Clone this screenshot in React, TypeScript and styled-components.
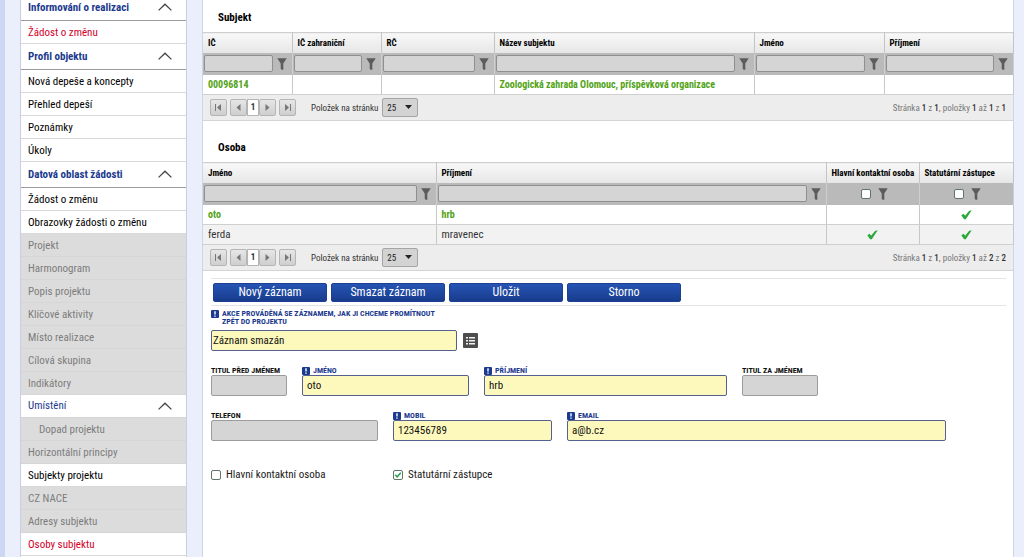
import React, { useId, useState } from "react";
import styled, { createGlobalStyle, css } from "styled-components";

const Global = createGlobalStyle`
  *, *::before, *::after { box-sizing: border-box; }
  body { margin: 0; background: #ebeffc; }
  body, input, button, select {
    font-family: "Roboto Condensed", "Liberation Sans Narrow", Roboto, sans-serif;
    font-size: 11px;
    color: #1a1a1a;
  }
`;

const Page = styled.div`
  display: flex;
  align-items: stretch;
  min-height: 100vh;
  padding: 0 10px 0 15px;
  border-left: 5px solid #cdd7f3;
  overflow: hidden;
`;

const Sidebar = styled.nav`
  flex: 0 0 167px;
  margin: -5px 15px 0 0;
  background: #fff;
  border: solid #c9cfe0;
  border-width: 0 1px;
`;

const SideHeader = styled.button<{ $nested?: boolean }>`
  display: flex;
  align-items: center;
  justify-content: space-between;
  width: 100%;
  height: ${(p) => (p.$nested ? 23 : 26)}px;
  padding: 0 14px 1px 7px;
  border: 0;
  border-bottom: 1px solid ${(p) => (p.$nested ? "#d5d5d5" : "#9a9a9a")};
  background: #fff;
  color: #1c3a8e;
  font-size: 11px;
  font-weight: ${(p) => (p.$nested ? 400 : 700)};
  text-align: left;
`;

const tones = {
  normal: css`color: #000; background: #fff;`,
  active: css`color: #d3002a; background: #fff;`,
  muted: css`color: #7c7c7c; background: #dcdcdc; border-bottom-color: #d6d6d6;`,
};

const SideItem = styled.a<{ $tone: keyof typeof tones; $indent?: boolean }>`
  display: block;
  height: 23px;
  padding-left: ${(p) => (p.$indent ? 18 : 7)}px;
  border-bottom: 1px solid #d9d9d9;
  font-size: 11px;
  line-height: 24px;
  text-decoration: none;
  white-space: nowrap;
  ${(p) => tones[p.$tone]}
`;

const Main = styled.main`
  flex: 1 1 0;
  min-width: 0;
  background: #fff;
  border: solid #cfd5e6;
  border-width: 0 1px;
`;

const Title = styled.h2<{ $first?: boolean }>`
  margin: 0;
  padding: ${(p) => (p.$first ? 10 : 19)}px 15px 6px;
  font-size: 11px;
  font-weight: 700;
  line-height: 16px;
  color: #000;
`;

const Table = styled.table`
  width: 100%;
  table-layout: fixed;
  border-collapse: collapse;
`;

const HeadCell = styled.th`
  height: 20px;
  padding: 0 5px;
  border-top: 1px solid #cfcfcf;
  border-right: 1px solid #c4c4c4;
  background: linear-gradient(#f8f8f8, #e6e6e6);
  color: #000;
  font-size: 9px;
  font-weight: 700;
  line-height: 12px;
  text-align: left;
  white-space: nowrap;
`;

const FilterCell = styled.td`
  height: 22px;
  padding: 0 5px 0 1px;
  border-right: 1px solid #cfcfcf;
  background: #bababa;
`;

const FilterLine = styled.div<{ $center?: boolean }>`
  display: flex;
  align-items: center;
  gap: ${(p) => (p.$center ? 7 : 4)}px;
  justify-content: ${(p) => (p.$center ? "center" : "stretch")};
  padding-left: ${(p) => (p.$center ? 7 : 0)}px;
`;

const FilterInput = styled.input`
  flex: 1 1 0;
  min-width: 0;
  height: 17px;
  padding: 0 3px;
  border: 1px solid #8f8f8f;
  border-radius: 2px;
  background: #d5d5d5;
`;

const IconButton = styled.button`
  display: flex;
  padding: 0;
  border: 0;
  background: none;
`;

const BodyCell = styled.td<{ $selected?: boolean; $center?: boolean }>`
  height: 20px;
  padding: 1px 5px 0;
  border-right: 1px solid #c8c8c8;
  border-bottom: 1px solid #d0d0d0;
  color: ${(p) => (p.$selected ? "#52a315" : "#333")};
  font-size: ${(p) => (p.$selected ? 10 : 11)}px;
  font-weight: ${(p) => (p.$selected ? 700 : 400)};
  line-height: 14px;
  text-align: ${(p) => (p.$center ? "center" : "left")};
  white-space: nowrap;

  svg { display: block; margin: 0 auto; }
`;

const BodyRow = styled.tr<{ $alt?: boolean }>`
  background: ${(p) => (p.$alt ? "#f2f2f2" : "#fff")};
`;

const PagerBar = styled.div`
  display: flex;
  align-items: center;
  height: 26px;
  padding: 0 7px;
  border-bottom: 1px solid #d4d4d4;
  background: #ededed;
  color: #333;
`;

const PagerButtons = styled.div`
  display: flex;
  align-items: center;
  gap: 3px;
`;

const PagerGroup = styled.div`
  display: flex;
`;

const PagerButton = styled.button`
  display: flex;
  align-items: center;
  justify-content: center;
  width: 17px;
  height: 17px;
  padding: 0;
  border: 1px solid #b5b5b5;
  border-radius: 2px;
  background: linear-gradient(#e6e6e6, #cfcfcf);
`;

const PageNumber = styled.span`
  width: 12px;
  height: 17px;
  border: 1px solid #b5b5b5;
  background: #fff;
  font-size: 9px;
  font-weight: 700;
  line-height: 15px;
  text-align: center;
`;

const PageSizeLabel = styled.label`
  margin: 0 4px 0 15px;
  font-size: 9px;
`;

const SelectWrap = styled.span`
  position: relative;
  display: flex;
  svg { position: absolute; right: 6px; top: 7px; pointer-events: none; }
`;

const PageSize = styled.select`
  appearance: none;
  width: 36px;
  height: 19px;
  padding: 0 4px;
  border: 1px solid #a5a5a5;
  border-radius: 2px;
  background: #d3d3d3;
  color: #222;
  font-size: 9px;
`;

const PageInfo = styled.span`
  margin-left: auto;
  color: #777;
  font-size: 9px;
  white-space: nowrap;
  b { font-weight: 500; color: #333; }
`;

const Form = styled.form`
  padding: 7px 7px 0 8px;
`;

const Toolbar = styled.div`
  display: flex;
  gap: 4px;
  padding: 4px 2px 3px;
  border-top: 1px solid #e4e4e4;
  border-bottom: 1px solid #e4e4e4;
`;

const Action = styled.button`
  width: 114px;
  height: 19px;
  padding: 0;
  border: 1px solid #1c3f94;
  border-radius: 2px;
  background: linear-gradient(#2654b4, #183c8c);
  color: #fff;
  font-size: 12px;
  line-height: 17px;
`;

const FieldRow = styled.div<{ $top: number }>`
  display: flex;
  align-items: flex-end;
  gap: 15px;
  margin-top: ${(p) => p.$top}px;
`;

const FieldBox = styled.div<{ $width: number }>`
  display: flex;
  flex-direction: column;
  flex: 0 1 ${(p) => p.$width}px;
  min-width: 0;
`;

const FieldLabel = styled.label<{ $required?: boolean }>`
  display: flex;
  gap: 3px;
  color: ${(p) => (p.$required ? "#1c3a8e" : "#111")};
  font-size: 8px;
  font-weight: 700;
  line-height: 8px;
  text-transform: uppercase;
  svg { flex: none; }
`;

const TextInput = styled.input<{ $required?: boolean; $tight?: boolean }>`
  width: 100%;
  height: 21px;
  padding: 0 ${(p) => (p.$tight ? 1 : 4)}px;
  border: 1px solid ${(p) => (p.$required ? "#55608f" : "#9c9c9c")};
  border-radius: 2px;
  background: ${(p) => (p.$required ? "#fdf9bd" : "#d5d5d5")};
  color: #111;
  font-size: 11px;
`;

const ActionBlock = styled.div`
  margin-top: 4px;
`;

const LabelText = styled.span<{ $max?: number }>`
  max-width: ${(p) => (p.$max ? `${p.$max}px` : "none")};
  white-space: ${(p) => (p.$max ? "normal" : "nowrap")};
`;

const ComboRow = styled.div`
  display: flex;
  align-items: center;
  gap: 6px;
  margin-top: 4px;
`;

const ComboField = styled.div`
  flex: 0 1 246px;
`;

const CheckRow = styled.div`
  display: flex;
  margin-top: 27px;
`;

const CheckItem = styled.label`
  display: flex;
  align-items: center;
  gap: 5px;
  flex: 0 0 182px;
  font-size: 11px;
  line-height: 14px;
`;

const BoxWrap = styled.span`
  position: relative;
  display: flex;
  svg { position: absolute; left: 1px; top: 1px; pointer-events: none; }
`;

const Box = styled.input`
  appearance: none;
  width: 10px;
  height: 10px;
  margin: 0;
  border: 1px solid #5f7568;
  border-radius: 2px;
  background: #fff;
`;

const Chevron = () => (
  <svg width="14" height="8" viewBox="0 0 14 8" fill="none" stroke="#444" strokeWidth="1.3">
    <path d="M.6 7.4 7 1.2l6.400 6.200" />
  </svg>
);

const Funnel = () => (
  <svg width="10" height="12" viewBox="0 0 10 12" fill="#5c5c5c">
    <path d="M.3.3h9.400L6.300 5.600V11.700H4.500L3.700 10.500V5.600z" />
  </svg>
);

const Tick = () => (
  <svg width="11" height="10" viewBox="0 0 11 10" fill="#2aa83c">
    <path d="M.3 5.200 2.700 3.800l1.400 1.900L8 1 10.700.3 4.800 9.200H3.100z" />
  </svg>
);

const Required = () => (
  <svg width="8" height="8" viewBox="0 0 8 8">
    <rect width="8" height="8" rx="1" fill="#1c3a8e" />
    <path d="M3.300 1.200h1.400v3.400H3.300zM3.300 5.400h1.400v1.300H3.300z" fill="#fff" />
  </svg>
);

const ListIcon = () => (
  <svg width="15" height="15" viewBox="0 0 15 15">
    <rect width="15" height="15" rx="1" fill="#4d4d4d" />
    <path d="M3 4h2v1.500H3zM3 7h2v1.500H3zM3 10h2v1.500H3zM6 4h6v1.500H6zM6 7h6v1.500H6zM6 10h6v1.500H6z" fill="#f2f2f2" />
  </svg>
);

const arrows = {
  first: "M1 1h1v7H1zM7 1v7L3 4.500z",
  prev: "M6.500 1v7L2.500 4.500z",
  next: "M2.500 1v7l4-3.500z",
  last: "M7 1h1v7H7zM2 1v7l4-3.500z",
};

const Arrow = ({ kind }: { kind: keyof typeof arrows }) => (
  <svg width="9" height="9" viewBox="0 0 9 9" fill="#777">
    <path d={arrows[kind]} />
  </svg>
);

function Pager({ count }: { count: number }) {
  const id = useId();
  return (
    <PagerBar>
      <PagerButtons>
        <PagerButton aria-label="První"><Arrow kind="first" /></PagerButton>
        <PagerGroup>
          <PagerButton aria-label="Předchozí"><Arrow kind="prev" /></PagerButton>
          <PageNumber>1</PageNumber>
          <PagerButton aria-label="Další"><Arrow kind="next" /></PagerButton>
        </PagerGroup>
        <PagerButton aria-label="Poslední"><Arrow kind="last" /></PagerButton>
      </PagerButtons>
      <PageSizeLabel htmlFor={id}>Položek na stránku</PageSizeLabel>
      <SelectWrap>
        <PageSize id={id} defaultValue="25">
          <option>25</option>
        </PageSize>
        <svg width="7" height="4" viewBox="0 0 7 4" fill="#222"><path d="M0 0h7L3.500 4z" /></svg>
      </SelectWrap>
      <PageInfo>
        Stránka <b>1</b> z <b>1</b>, položky <b>1</b> až <b>{count}</b> z <b>{count}</b>
      </PageInfo>
    </PagerBar>
  );
}

type Column = { name: string; width: number; check?: boolean };

function Grid({ columns, rows }: { columns: Column[]; rows: (string | boolean)[][] }) {
  return (
    <Table>
      <colgroup>
        {columns.map((c) => <col key={c.name} width={c.width} />)}
      </colgroup>
      <thead>
        <tr>{columns.map((c) => <HeadCell key={c.name} scope="col">{c.name}</HeadCell>)}</tr>
      </thead>
      <tbody>
        <tr>
          {columns.map((c) => (
            <FilterCell key={c.name}>
              <FilterLine $center={c.check}>
                {c.check ? (
                  <Box type="checkbox" aria-label={c.name} />
                ) : (
                  <FilterInput aria-label={c.name} />
                )}
                <IconButton aria-label="Filtr"><Funnel /></IconButton>
              </FilterLine>
            </FilterCell>
          ))}
        </tr>
        {rows.map((row, r) => (
          <BodyRow key={r} $alt={r % 2 === 1}>
            {row.map((v, i) => (
              <BodyCell key={i} $selected={r === 0} $center={columns[i].check}>
                {v === true ? <Tick /> : v}
              </BodyCell>
            ))}
          </BodyRow>
        ))}
      </tbody>
    </Table>
  );
}

function Field({ label, width, value, required }: { label: string; width: number; value?: string; required?: boolean }) {
  const id = useId();
  return (
    <FieldBox $width={width}>
      <FieldLabel htmlFor={id} $required={required}>
        {required && <Required />}
        <LabelText>{label}</LabelText>
      </FieldLabel>
      <TextInput id={id} defaultValue={value} $required={required} />
    </FieldBox>
  );
}

function Check({ label, initial }: { label: string; initial: boolean }) {
  const [on, setOn] = useState(initial);
  return (
    <CheckItem>
      <BoxWrap>
        <Box type="checkbox" checked={on} onChange={() => setOn(!on)} />
        {on && (
          <svg width="8" height="8" viewBox="0 0 8 8" fill="none" stroke="#2aa04c" strokeWidth="1.5">
            <path d="M1.200 3.800 3.200 5.800 6.800 1.800" />
          </svg>
        )}
      </BoxWrap>
      {label}
    </CheckItem>
  );
}

type Entry = { text: string; kind: "header" | "nested" | keyof typeof tones; indent?: boolean };

const menu: Entry[] = [
  { text: "Informování o realizaci", kind: "header" },
  { text: "Žádost o změnu", kind: "active" },
  { text: "Profil objektu", kind: "header" },
  { text: "Nová depeše a koncepty", kind: "normal" },
  { text: "Přehled depeší", kind: "normal" },
  { text: "Poznámky", kind: "normal" },
  { text: "Úkoly", kind: "normal" },
  { text: "Datová oblast žádosti", kind: "header" },
  { text: "Žádost o změnu", kind: "normal" },
  { text: "Obrazovky žádosti o změnu", kind: "normal" },
  { text: "Projekt", kind: "muted" },
  { text: "Harmonogram", kind: "muted" },
  { text: "Popis projektu", kind: "muted" },
  { text: "Klíčové aktivity", kind: "muted" },
  { text: "Místo realizace", kind: "muted" },
  { text: "Cílová skupina", kind: "muted" },
  { text: "Indikátory", kind: "muted" },
  { text: "Umístění", kind: "nested" },
  { text: "Dopad projektu", kind: "muted", indent: true },
  { text: "Horizontální principy", kind: "muted" },
  { text: "Subjekty projektu", kind: "normal" },
  { text: "CZ NACE", kind: "muted" },
  { text: "Adresy subjektu", kind: "muted" },
  { text: "Osoby subjektu", kind: "active" },
];

export default function App() {
  return (
    <>
      <Global />
      <Page>
        <Sidebar>
          {menu.map((m, i) =>
            m.kind === "header" || m.kind === "nested" ? (
              <SideHeader key={i} $nested={m.kind === "nested"}>
                {m.text}
                <Chevron />
              </SideHeader>
            ) : (
              <SideItem key={i} href="#" $tone={m.kind} $indent={m.indent}>{m.text}</SideItem>
            )
          )}
        </Sidebar>
        <Main>
          <Title $first>Subjekt</Title>
          <Grid
            columns={[
              { name: "IČ", width: 89 },
              { name: "IČ zahraniční", width: 89 },
              { name: "RČ", width: 113 },
              { name: "Název subjektu", width: 260 },
              { name: "Jméno", width: 130 },
              { name: "Příjmení", width: 129 },
            ]}
            rows={[["00096814", "", "", "Zoologická zahrada Olomouc, příspěvková organizace", "", ""]]}
          />
          <Pager count={1} />
          <Title>Osoba</Title>
          <Grid
            columns={[
              { name: "Jméno", width: 233 },
              { name: "Příjmení", width: 390 },
              { name: "Hlavní kontaktní osoba", width: 93, check: true },
              { name: "Statutární zástupce", width: 94, check: true },
            ]}
            rows={[
              ["oto", "hrb", "", true],
              ["ferda", "mravenec", true, true],
            ]}
          />
          <Pager count={2} />
          <Form onSubmit={(e) => e.preventDefault()}>
            <Toolbar>
              <Action>Nový záznam</Action>
              <Action>Smazat záznam</Action>
              <Action>Uložit</Action>
              <Action>Storno</Action>
            </Toolbar>
            <ActionBlock>
              <FieldLabel htmlFor="akce" $required>
                <Required />
                <LabelText $max={222}>Akce prováděná se záznamem, jak ji chceme promítnout zpět do projektu</LabelText>
              </FieldLabel>
              <ComboRow>
                <ComboField>
                  <TextInput id="akce" defaultValue="Záznam smazán" $required $tight />
                </ComboField>
                <IconButton type="button" aria-label="Vybrat"><ListIcon /></IconButton>
              </ComboRow>
            </ActionBlock>
            <FieldRow $top={16}>
              <Field label="Titul před jménem" width={76} />
              <Field label="Jméno" width={167} value="oto" required />
              <Field label="Příjmení" width={243} value="hrb" required />
              <Field label="Titul za jménem" width={76} />
            </FieldRow>
            <FieldRow $top={16}>
              <Field label="Telefon" width={167} />
              <Field label="Mobil" width={159} value="123456789" required />
              <Field label="Email" width={379} value="a@b.cz" required />
            </FieldRow>
            <CheckRow>
              <Check label="Hlavní kontaktní osoba" initial={false} />
              <Check label="Statutární zástupce" initial />
            </CheckRow>
          </Form>
        </Main>
      </Page>
    </>
  );
}
